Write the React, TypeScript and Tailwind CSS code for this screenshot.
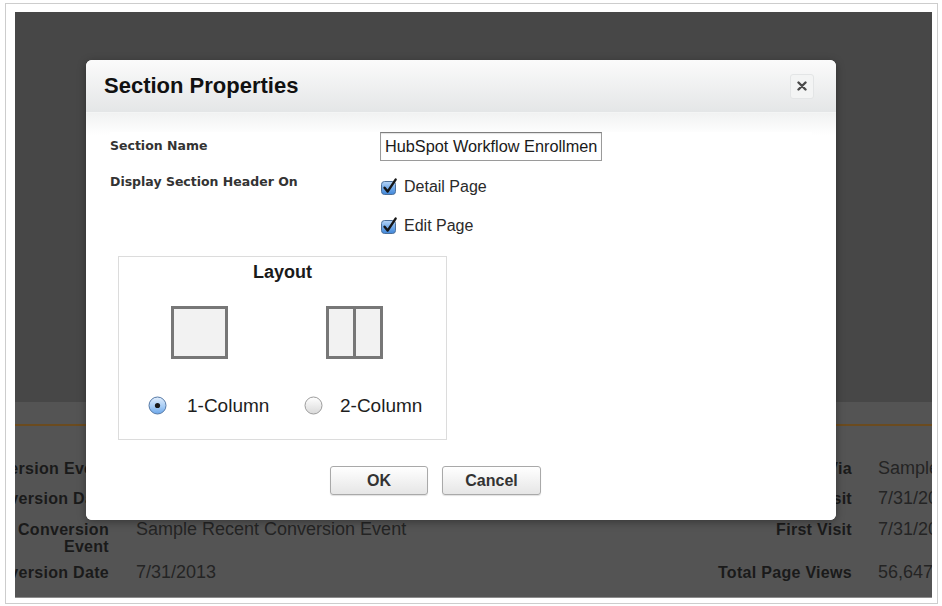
import type { ReactNode } from "react";

const SANS = "font-['Liberation_Sans',Arial,sans-serif]";

function CheckMark() {
  return (
    <svg width="18" height="18" viewBox="0 0 18 18" className="shrink-0">
      <defs>
        <linearGradient id="cbfill" x1="0" y1="0" x2="0" y2="1">
          <stop offset="0" stopColor="#b7d5f6" />
          <stop offset="0.5" stopColor="#74abe9" />
          <stop offset="1" stopColor="#3f86d9" />
        </linearGradient>
      </defs>
      <rect x="1.5" y="3.5" width="14" height="13" rx="3" fill="url(#cbfill)" stroke="#4d6f98" />
      <path
        d="M4.6 9.8 L7.6 13.6 L15.6 1.6"
        fill="none"
        stroke="#161616"
        strokeWidth="2.4"
        strokeLinecap="round"
        strokeLinejoin="round"
      />
    </svg>
  );
}

function Radio({ checked }: { checked?: boolean }) {
  return (
    <svg width="19" height="19" viewBox="0 0 19 19" className="shrink-0">
      <defs>
        <linearGradient id="rdOn" x1="0" y1="0" x2="0" y2="1">
          <stop offset="0" stopColor="#e2eefc" />
          <stop offset="0.55" stopColor="#a8cdf5" />
          <stop offset="1" stopColor="#6aa6ea" />
        </linearGradient>
        <linearGradient id="rdOff" x1="0" y1="0" x2="0" y2="1">
          <stop offset="0" stopColor="#ffffff" />
          <stop offset="1" stopColor="#d9d9d9" />
        </linearGradient>
      </defs>
      <circle
        cx="9.5"
        cy="9.5"
        r="8.5"
        fill={checked ? "url(#rdOn)" : "url(#rdOff)"}
        stroke={checked ? "#5679a6" : "#9c9c9c"}
      />
      {checked && <circle cx="9.5" cy="9.5" r="2.6" fill="#1a1a1a" />}
    </svg>
  );
}

function Button({ children, w }: { children: ReactNode; w: string }) {
  return (
    <button
      className={`${w} h-[29px] rounded-[3px] border border-[#a9a9a9] bg-gradient-to-b from-white to-[#e6e6e6] text-[16px] font-bold text-[#333] shadow-[0_1px_1px_rgba(0,0,0,0.12)]`}
    >
      {children}
    </button>
  );
}

function BgRow({
  label,
  value,
  rlabel,
  rvalue,
  h,
}: {
  label: ReactNode;
  value: string;
  rlabel: string;
  rvalue: string;
  h: string;
}) {
  return (
    <div className={`flex items-start ${h} leading-[17px] text-[#1a1a1a]`}>
      <div className="flex w-[94px] shrink-0 justify-end whitespace-nowrap text-right text-[16px] font-bold tracking-[0.3px]">
        {label}
      </div>
      <div className="ml-[27px] w-[516px] shrink-0 whitespace-nowrap text-[18px] text-[#242424]">{value}</div>
      <div className="flex w-[200px] shrink-0 justify-end whitespace-nowrap text-[16px] font-bold tracking-[0.3px]">
        {rlabel}
      </div>
      <div className="ml-[26px] whitespace-nowrap text-[18px] text-[#242424]">{rvalue}</div>
    </div>
  );
}

export default function App() {
  return (
    <div className={`h-[606px] w-[942px] overflow-hidden bg-white pl-[5px] pt-[3px] ${SANS}`}>
      <div className="h-[601px] w-[933px] border border-[#cdcdcd] pb-[5px] pl-[9px] pr-[5px] pt-[8px]">
        <div className="relative flex h-full flex-col overflow-hidden border-b border-[#8c8c8c] bg-[#474747]">
          <div className="h-[390px] shrink-0 bg-[#474747]" />
          <div className="flex-1 bg-[#545454] pt-[22px]">
            <div className="h-[2px] bg-[#6b4b1f]" />
            <div className="pt-[34px]">
              <BgRow h="h-[30px]" label="First Conversion Event" value="" rlabel="Became a Lead Via" rvalue="Sample Lead Source" />
              <BgRow h="h-[31px]" label="First Conversion Date" value="" rlabel="Last Visit" rvalue="7/31/2013" />
              <BgRow
                h="h-[43px]"
                label={
                  <span>
                    Recent Conversion
                    <br />
                    Event
                  </span>
                }
                value="Sample Recent Conversion Event"
                rlabel="First Visit"
                rvalue="7/31/2013"
              />
              <BgRow h="h-[20px]" label="Recent Conversion Date" value="7/31/2013" rlabel="Total Page Views" rvalue="56,647" />
            </div>
          </div>

          {/* modal dialog */}
          <div className="absolute left-[71px] top-[48px] flex h-[460px] w-[750px] flex-col overflow-hidden rounded-[6px] bg-white shadow-[0_2px_8px_rgba(0,0,0,0.35)]">
            <div className="flex h-[53px] shrink-0 items-center justify-between border-b border-[#f4f5f5] bg-gradient-to-b from-[#fbfbfb] to-[#e4e6e7] pl-[18px] pr-[22px]">
              <h1 className="text-[22px] font-bold leading-none text-[#111]">Section Properties</h1>
              <div className="flex h-[25px] w-[24px] items-center justify-center rounded-[3px] border border-[#e3e5e6] bg-[#f3f4f4]">
                <svg width="10" height="10" viewBox="0 0 10 10">
                  <path d="M1.5 1.5 L8.5 8.5 M8.5 1.5 L1.5 8.5" stroke="#4a4a4a" strokeWidth="2.4" strokeLinecap="round" />
                </svg>
              </div>
            </div>

            <div className="flex-1 bg-[linear-gradient(to_bottom,#f1f2f2,#ffffff_22px)] px-[24px] pt-[19px]">
              <div className="bg-white">
                <div className="flex">
                  <div className="w-[270px] shrink-0 pt-[6px] font-['DejaVu_Sans',sans-serif] text-[12.5px] font-bold leading-[16px] text-[#333]">
                    Section Name
                  </div>
                  <input
                    readOnly
                    value="HubSpot Workflow Enrollment Details"
                    className="h-[29px] w-[222px] border border-[#9a9a9a] border-t-[#7e7e7e] bg-white px-[4px] text-[16.3px] text-[#1a1a1a] outline-none shadow-[inset_0_1px_1px_rgba(0,0,0,0.12)]"
                  />
                </div>

                <div className="flex">
                  <div className="w-[270px] shrink-0 pt-[13px] font-['DejaVu_Sans',sans-serif] text-[12.5px] font-bold leading-[16px] text-[#333]">
                    Display Section Header On
                  </div>
                  <div className="flex flex-col gap-[19px] pt-[16px]">
                    <label className="flex h-[20px] items-center gap-[6px] text-[16px] text-[#2a2a2a]">
                      <CheckMark />
                      Detail Page
                    </label>
                    <label className="flex h-[20px] items-center gap-[6px] text-[16px] text-[#2a2a2a]">
                      <CheckMark />
                      Edit Page
                    </label>
                  </div>
                </div>

                <div className="ml-[8px] mt-[20px] h-[184px] w-[329px] border border-[#dcdcdc] pt-[5px]">
                  <div className="text-center text-[18px] font-bold leading-[20px] text-[#1a1a1a]">Layout</div>
                  <div className="flex pl-[52px] pt-[24px]">
                    <div className="h-[53px] w-[57px] border-[3px] border-[#777] bg-[#f2f2f2]" />
                    <div className="ml-[98px] flex h-[53px] w-[57px] border-[3px] border-[#777] bg-[#f2f2f2]">
                      <div className="flex-1" />
                      <div className="w-[3px] bg-[#777]" />
                      <div className="flex-1" />
                    </div>
                  </div>
                  <div className="flex pl-[29px] pt-[37px] text-[19px] leading-[19px] text-[#1e1e1e]">
                    <div className="flex w-[156px] items-center gap-[20px]">
                      <Radio checked />
                      1-Column
                    </div>
                    <div className="flex items-center gap-[17px]">
                      <Radio />
                      2-Column
                    </div>
                  </div>
                </div>

                <div className="flex gap-[14px] pl-[220px] pt-[26px]">
                  <Button w="w-[98px]">OK</Button>
                  <Button w="w-[99px]">Cancel</Button>
                </div>
              </div>
            </div>
          </div>
        </div>
      </div>
    </div>
  );
}
